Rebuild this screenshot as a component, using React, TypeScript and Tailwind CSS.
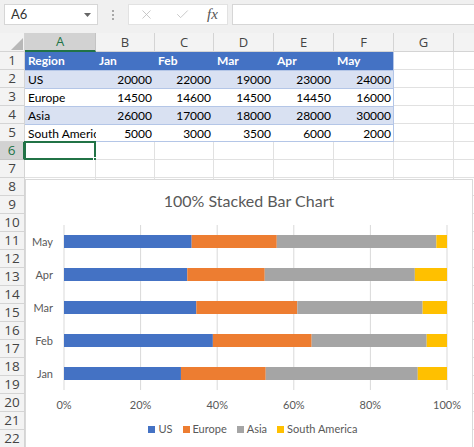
import React from 'react'
import { X, Check } from 'lucide-react'

const cols = [
  { key: 'A', w: 'w-[71px]' },
  { key: 'B', w: 'w-[59px]' },
  { key: 'C', w: 'w-[59px]' },
  { key: 'D', w: 'w-[60px]' },
  { key: 'E', w: 'w-[60px]' },
  { key: 'F', w: 'w-[60px]' },
  { key: 'G', w: 'w-[60px]' },
  { key: 'H', w: 'w-[60px]' },
]

const months = ['Jan', 'Feb', 'Mar', 'Apr', 'May']

const data = [
  { region: 'US', values: [20000, 22000, 19000, 23000, 24000], color: '#4472c4' },
  { region: 'Europe', values: [14500, 14600, 14500, 14450, 16000], color: '#ed7d31' },
  { region: 'Asia', values: [26000, 17000, 18000, 28000, 30000], color: '#a5a5a5' },
  { region: 'South America', values: [5000, 3000, 3500, 6000, 2000], color: '#ffc000' },
]

function Toolbar() {
  return (
    <div className="h-[33px] bg-[#f0f0f0] flex items-start pt-[4px] pl-[4px] gap-0">
      {/* name box */}
      <div className="w-[94px] h-[21px] bg-white border border-[#d6d6d6] flex items-center justify-between pl-[6px] pr-[6px]">
        <span className="text-[13px] text-[#333]">A6</span>
        <svg width="7" height="4" viewBox="0 0 7 4">
          <path d="M0 0 L7 0 L3.5 4 Z" fill="#666" />
        </svg>
      </div>
      <div className="w-[30px] h-[21px] flex flex-col items-center justify-center gap-[2px]">
        <div className="w-[2px] h-[2px] bg-[#a8a8a8]" />
        <div className="w-[2px] h-[2px] bg-[#a8a8a8]" />
        <div className="w-[2px] h-[2px] bg-[#a8a8a8]" />
      </div>
      {/* formula buttons */}
      <div className="w-[100px] h-[21px] bg-white border border-[#e2e2e2] flex items-center pl-[10px]">
        <X size={15} strokeWidth={1.3} color="#bdbdbd" />
        <Check size={15} strokeWidth={1.3} color="#bdbdbd" className="ml-[21px]" />
        <span className="ml-[17px] text-[15px] italic text-[#555] font-['Liberation_Serif',serif] leading-none">fx</span>
      </div>
      <div className="ml-[4px] flex-1 h-[21px] bg-white border border-[#d6d6d6] border-r-0" />
    </div>
  )
}

function ColumnHeaders() {
  return (
    <div className="flex h-[19px] bg-[#f3f3f3] font-['Open_Sans',sans-serif] text-[13px] text-[#444]">
      <div className="w-[25px] shrink-0 border-r border-b border-[#d4d4d4] relative overflow-hidden">
        <svg width="25" height="19" className="block">
          <path d="M23 5 L23 17 L11 17 Z" fill="#b8b8b8" />
        </svg>
      </div>
      {cols.map((c) => (
        <div
          key={c.key}
          className={
            c.key === 'A'
              ? `${c.w} shrink-0 bg-[#d2d2d2] text-[#217346] border-r border-[#c4c4c4] border-b-2 border-b-[#217346] flex items-center justify-center leading-none`
              : `${c.w} shrink-0 border-r border-b border-[#d4d4d4] flex items-center justify-center leading-none`
          }
        >
          {c.key === 'H' ? '' : c.key}
        </div>
      ))}
    </div>
  )
}

function RowHeader({ n }: { n: number }) {
  const selected = n === 6
  return (
    <div
      className={
        selected
          ? 'w-[25px] shrink-0 bg-[#d2d2d2] text-[#217346] border-b border-[#c4c4c4] border-r-2 border-r-[#217346] flex items-center justify-center'
          : 'w-[25px] shrink-0 bg-[#f3f3f3] text-[#444] border-b border-r border-[#d4d4d4] flex items-center justify-center'
      }
    >
      <span className="text-[13.5px] font-['Open_Sans',sans-serif] leading-none">{n}</span>
    </div>
  )
}

function TableRow({ idx }: { idx: number }) {
  // idx 0 = header row, 1..4 data rows
  const isHeader = idx === 0
  const band = idx === 1 || idx === 3
  const rowBg = isHeader ? 'bg-[#4472c4]' : band ? 'bg-[#d9e1f2]' : 'bg-white'
  const line = isHeader ? '' : 'border-t border-[#b4c6e7]'
  const label = isHeader ? 'Region' : data[idx - 1].region
  const cells = isHeader ? months : data[idx - 1].values.map(String)
  return (
    <div className="flex h-[18px]">
      <RowHeader n={idx + 1} />
      <div className={`flex w-[369px] shrink-0 ${rowBg} ${line} ${idx === 4 ? 'border-b' : ''} border-r border-[#b4c6e7]`}>
        <div
          className={`w-[71px] shrink-0 px-[3px] overflow-hidden whitespace-nowrap text-[12px] leading-[17px] ${
            isHeader ? 'text-white font-bold' : 'text-black'
          }`}
        >
          {label}
        </div>
        {cells.map((v, i) => (
          <div
            key={i}
            className={`${i < 2 ? 'w-[59px]' : 'w-[60px]'} shrink-0 px-[3px] whitespace-nowrap text-[12px] leading-[17px] ${
              isHeader ? 'text-white font-bold text-left' : 'text-black text-right'
            }`}
          >
            {v}
          </div>
        ))}
      </div>
      <div className="w-[60px] shrink-0 border-r border-b border-[#e1e1e1] bg-white" />
      <div className="w-[60px] shrink-0 border-b border-[#e1e1e1] bg-white" />
    </div>
  )
}

function EmptyRow({ n }: { n: number }) {
  return (
    <div className="flex h-[18px]">
      <RowHeader n={n} />
      {cols.map((c) => (
        <div
          key={c.key}
          className={`${c.w} shrink-0 bg-white border-r border-b border-[#e1e1e1] relative`}
        >
          {n === 6 && c.key === 'A' && (
            <div className="absolute -left-px -top-px -right-px -bottom-px border-2 border-[#217346]">
              <div className="absolute -right-[4px] -bottom-[4px] w-[5px] h-[5px] bg-[#217346] border border-white" />
            </div>
          )}
        </div>
      ))}
    </div>
  )
}

function Chart() {
  const x0 = 38
  const w = 383
  const barY = [24, 57, 90, 123, 156]
  const order = [4, 3, 2, 1, 0]
  return (
    <div className="absolute left-[25px] top-[179px] w-[448px] h-[280px] bg-white border border-[#d9d9d9] flex flex-col font-['Lato',sans-serif]">
      <div className="mt-[11px] h-[20px] text-center text-[16px] leading-[20px] text-[#595959]">
        100% Stacked Bar Chart
      </div>
      <svg width="446" height="206" className="block">
        {[0, 1, 2, 3, 4, 5].map((i) => (
          <line
            key={i}
            x1={x0 + (w * i) / 5}
            x2={x0 + (w * i) / 5}
            y1={14}
            y2={179}
            stroke="#d9d9d9"
            strokeWidth={1}
          />
        ))}
        {order.map((m, row) => {
          const total = data.reduce((s, d) => s + d.values[m], 0)
          let acc = 0
          return (
            <g key={m}>
              {data.map((d) => {
                const x = x0 + (acc / total) * w
                acc += d.values[m]
                const x2 = x0 + (acc / total) * w
                return <rect key={d.region} x={x} y={barY[row]} width={x2 - x} height={13} fill={d.color} />
              })}
              <text
                x={27}
                y={barY[row] + 10.5}
                textAnchor="end"
                fontSize="11"
                fill="#595959"
                fontFamily="Lato, sans-serif"
              >
                {months[m]}
              </text>
            </g>
          )
        })}
        {[0, 1, 2, 3, 4, 5].map((i) => (
          <text
            key={i}
            x={x0 + (w * i) / 5}
            y={198}
            textAnchor="middle"
            fontSize="11"
            fill="#595959"
            fontFamily="Lato, sans-serif"
          >
            {i * 20}%
          </text>
        ))}
      </svg>
      <div className="mt-[5px] h-[14px] flex justify-center items-center gap-[10px] text-[11px] leading-[14px] text-[#595959] pl-[8px]">
        {data.map((d) => (
          <div key={d.region} className="flex items-center gap-[3px]">
            <div className="w-[7px] h-[7px]" style={{ backgroundColor: d.color }} />
            <span>{d.region}</span>
          </div>
        ))}
      </div>
    </div>
  )
}

export default function App() {
  return (
    <div className="w-[474px] h-[447px] overflow-hidden relative bg-white font-['Lato',sans-serif]">
      <Toolbar />
      <ColumnHeaders />
      {[0, 1, 2, 3, 4].map((i) => (
        <TableRow key={i} idx={i} />
      ))}
      {Array.from({ length: 17 }, (_, i) => i + 6).map((n) => (
        <EmptyRow key={n} n={n} />
      ))}
      <Chart />
    </div>
  )
}
